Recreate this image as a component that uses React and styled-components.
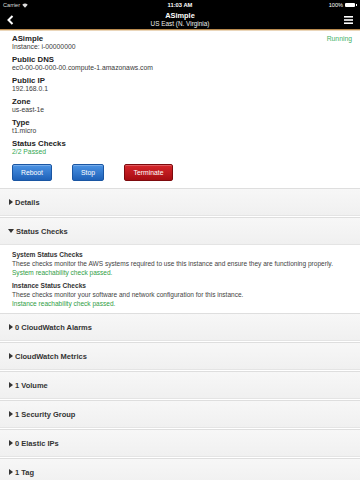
import React from 'react';
import styled, { createGlobalStyle } from 'styled-components';

const GlobalStyle = createGlobalStyle`
  html, body {
    margin: 0;
    padding: 0;
    background: #fff;
  }
  body {
    font-family: "Liberation Sans", Arial, sans-serif;
    color: #333;
  }
`;

const Page = styled.div`
  width: 360px;
  height: 480px;
  overflow: hidden;
  background: #fff;
`;

const TopBar = styled.div`
  background: #000;
  color: #fff;
  border-bottom: 1px solid #b98a4e;
  box-shadow: 0 1px 0 #ead6ba;
`;

const StatusBar = styled.div`
  height: 10px;
  display: grid;
  grid-template-columns: 1fr auto 1fr;
  align-items: center;
  padding: 0 3px;
  font-size: 5.6px;
`;

const StatusLeft = styled.div`
  display: flex;
  align-items: center;
  gap: 2px;
  color: #ddd;
`;

const StatusClock = styled.div`
  font-weight: bold;
  font-size: 5.8px;
`;

const StatusRight = styled.div`
  display: flex;
  align-items: center;
  justify-content: flex-end;
  gap: 2px;
`;

const Battery = styled.div`
  width: 10px;
  height: 4px;
  background: #fff;
  border-radius: 1px;
  position: relative;
  margin-right: 2px;

  &::after {
    content: '';
    position: absolute;
    right: -2px;
    top: 1px;
    width: 1px;
    height: 2px;
    background: #fff;
  }
`;

const NavBar = styled.div`
  height: 19px;
  display: grid;
  grid-template-columns: 30px 1fr 30px;
  align-items: center;
`;

const NavTitle = styled.div`
  text-align: center;
  line-height: 8px;
`;

const NavName = styled.div`
  font-weight: bold;
  font-size: 7.4px;
`;

const NavRegion = styled.div`
  font-size: 6.4px;
  color: #eee;
`;

const NavIcon = styled.div`
  display: flex;
  justify-content: ${p => (p.$right ? 'flex-end' : 'flex-start')};
  padding: 0 7px;
  align-items: center;
`;

const Info = styled.div`
  padding: 5px 12px 6px 12px;
  position: relative;
`;

const Field = styled.div`
  margin-bottom: 5px;
  line-height: 8px;
`;

const Label = styled.div`
  font-weight: bold;
  font-size: 7.8px;
  color: #222;
`;

const Value = styled.div`
  font-size: 6.8px;
  color: ${p => (p.$ok ? '#34a853' : '#3a3a3a')};
`;

const StateTag = styled.div`
  position: absolute;
  right: 8px;
  top: 5px;
  font-size: 6.8px;
  line-height: 8px;
  color: #3fb167;
`;

const Buttons = styled.div`
  display: flex;
  gap: 20px;
  margin-top: 8px;
`;

const Button = styled.button`
  font-family: inherit;
  font-size: 6.8px;
  color: #fff;
  height: 17px;
  width: ${p => p.$w}px;
  padding: 0;
  border-radius: 2px;
  border: 1px solid ${p => (p.$danger ? '#7d0a0d' : '#1a56a3')};
  background: ${p =>
    p.$danger
      ? 'linear-gradient(#d6262b, #a60d12)'
      : 'linear-gradient(#4b93e4, #1e61b8)'};
  box-shadow: inset 0 1px 0 rgba(255, 255, 255, 0.25);
`;

const Section = styled.div`
  margin-top: 1px;
`;

const SectionHead = styled.div`
  height: 26px;
  display: flex;
  align-items: center;
  gap: 2px;
  padding-left: ${p => (p.$open ? '8px' : '9px')};
  background: linear-gradient(#f7f7f7, #f0f0f0);
  border-top: 1px solid #dedede;
  border-bottom: 1px solid #e4e4e4;
  font-weight: bold;
  font-size: 7.5px;
  color: #333;
`;

const Arrow = styled.span`
  width: 0;
  height: 0;
  border-style: solid;
  ${p =>
    p.$open
      ? 'border-width: 4px 3px 0 3px; border-color: #333 transparent transparent transparent;'
      : 'border-width: 3px 0 3px 4px; border-color: transparent transparent transparent #333;'}
`;

const SectionBody = styled.div`
  padding: 5px 12px 4px 12px;
  background: #fff;
`;

const Check = styled.div`
  line-height: 9px;
  margin-bottom: ${p => (p.$last ? '0' : '4px')};
`;

const CheckTitle = styled.div`
  font-weight: bold;
  font-size: 6.6px;
  color: #333;
`;

const CheckText = styled.div`
  font-size: 6.55px;
  color: ${p => (p.$ok ? '#2f9e44' : '#444')};
`;

const fields = [
  ['Public DNS', 'ec0-00-00-000-00.compute-1.amazonaws.com'],
  ['Public IP', '192.168.0.1'],
  ['Zone', 'us-east-1e'],
  ['Type', 't1.micro'],
];

const collapsed = [
  '0 CloudWatch Alarms',
  'CloudWatch Metrics',
  '1 Volume',
  '1 Security Group',
  '0 Elastic IPs',
  '1 Tag',
];

const App = () => {
  return (
    <Page>
      <GlobalStyle />
      <TopBar>
        <StatusBar>
          <StatusLeft>
            Carrier
            <svg width="6" height="5" viewBox="0 0 12 9">
              <path d="M6 9 L0.5 3 A8 8 0 0 1 11.5 3 Z" fill="#ddd" />
            </svg>
          </StatusLeft>
          <StatusClock>11:03 AM</StatusClock>
          <StatusRight>
            100%
            <Battery />
          </StatusRight>
        </StatusBar>
        <NavBar>
          <NavIcon>
            <svg width="7" height="10" viewBox="0 0 7 10">
              <path d="M5.5 1 L1.5 5 L5.5 9" stroke="#fff" strokeWidth="2" fill="none" />
            </svg>
          </NavIcon>
          <NavTitle>
            <NavName>ASimple</NavName>
            <NavRegion>US East (N. Virginia)</NavRegion>
          </NavTitle>
          <NavIcon $right>
            <svg width="9" height="8" viewBox="0 0 9 8">
              <rect x="0" y="0" width="9" height="1.6" fill="#fff" />
              <rect x="0" y="3.2" width="9" height="1.6" fill="#fff" />
              <rect x="0" y="6.4" width="9" height="1.6" fill="#fff" />
            </svg>
          </NavIcon>
        </NavBar>
      </TopBar>

      <Info>
        <StateTag>Running</StateTag>
        <Field>
          <Label>ASimple</Label>
          <Value>Instance: i-00000000</Value>
        </Field>
        {fields.map(([k, v]) => (
          <Field key={k}>
            <Label>{k}</Label>
            <Value>{v}</Value>
          </Field>
        ))}
        <Field>
          <Label>Status Checks</Label>
          <Value $ok>2/2 Passed</Value>
        </Field>
        <Buttons>
          <Button $w={40}>Reboot</Button>
          <Button $w={32}>Stop</Button>
          <Button $w={49} $danger>Terminate</Button>
        </Buttons>
      </Info>

      <Section>
        <SectionHead>
          <Arrow />
          Details
        </SectionHead>
      </Section>

      <Section>
        <SectionHead $open>
          <Arrow $open />
          Status Checks
        </SectionHead>
        <SectionBody>
          <Check>
            <CheckTitle>System Status Checks</CheckTitle>
            <CheckText>
              These checks monitor the AWS systems required to use this instance and ensure they are functioning properly.
            </CheckText>
            <CheckText $ok>System reachability check passed.</CheckText>
          </Check>
          <Check $last>
            <CheckTitle>Instance Status Checks</CheckTitle>
            <CheckText>
              These checks monitor your software and network configuration for this instance.
            </CheckText>
            <CheckText $ok>Instance reachability check passed.</CheckText>
          </Check>
        </SectionBody>
      </Section>

      {collapsed.map(t => (
        <Section key={t}>
          <SectionHead>
            <Arrow />
            {t}
          </SectionHead>
        </Section>
      ))}
    </Page>
  );
};

export default App;
